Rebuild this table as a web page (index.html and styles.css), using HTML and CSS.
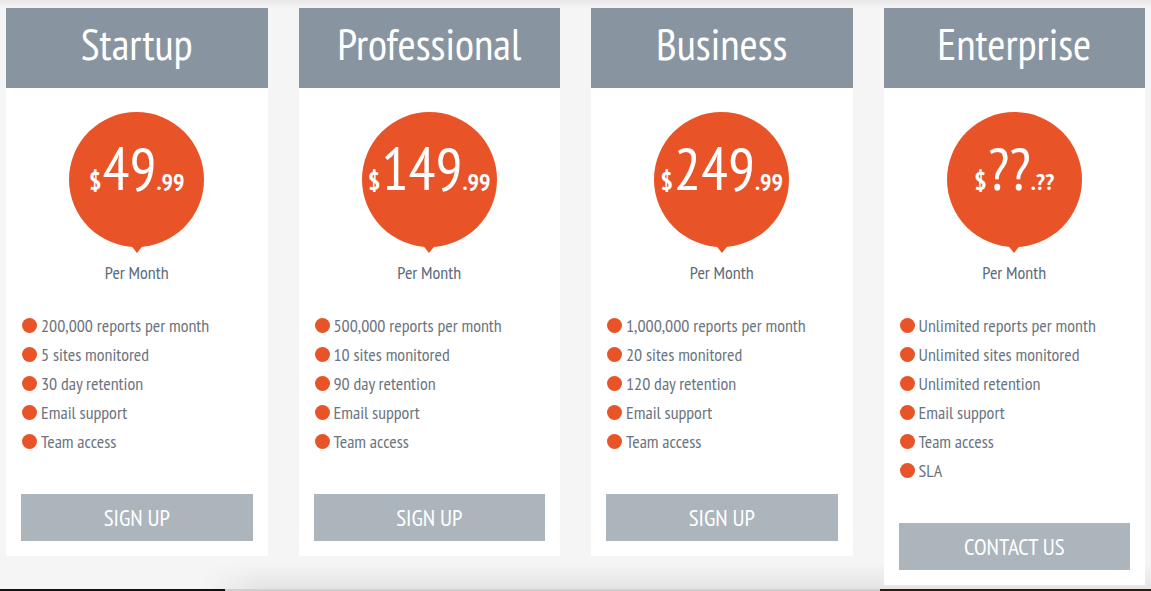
FILE: index.html
```html
<!DOCTYPE html>
<html lang="en">
<head>
<meta charset="utf-8">
<title>Pricing</title>
<link rel="stylesheet" href="styles.css">
</head>
<body>
<div class="topfade"></div>
<div class="bottomshade"></div>
<main class="plans">
  <section class="plan">
    <header class="plan-head"><h2>Startup</h2></header>
    <div class="plan-body">
      <div class="bubble"><span class="cur">$</span><span class="amt">49</span><span class="cents">.99</span></div>
      <p class="period">Per Month</p>
      <ul class="features">
        <li>200,000 reports per month</li>
        <li>5 sites monitored</li>
        <li>30 day retention</li>
        <li>Email support</li>
        <li>Team access</li>
      </ul>
      <a class="btn" href="#">Sign Up</a>
    </div>
  </section>
  <section class="plan">
    <header class="plan-head"><h2>Professional</h2></header>
    <div class="plan-body">
      <div class="bubble"><span class="cur">$</span><span class="amt">149</span><span class="cents">.99</span></div>
      <p class="period">Per Month</p>
      <ul class="features">
        <li>500,000 reports per month</li>
        <li>10 sites monitored</li>
        <li>90 day retention</li>
        <li>Email support</li>
        <li>Team access</li>
      </ul>
      <a class="btn" href="#">Sign Up</a>
    </div>
  </section>
  <section class="plan">
    <header class="plan-head"><h2>Business</h2></header>
    <div class="plan-body">
      <div class="bubble"><span class="cur">$</span><span class="amt">249</span><span class="cents">.99</span></div>
      <p class="period">Per Month</p>
      <ul class="features">
        <li>1,000,000 reports per month</li>
        <li>20 sites monitored</li>
        <li>120 day retention</li>
        <li>Email support</li>
        <li>Team access</li>
      </ul>
      <a class="btn" href="#">Sign Up</a>
    </div>
  </section>
  <section class="plan">
    <header class="plan-head"><h2>Enterprise</h2></header>
    <div class="plan-body">
      <div class="bubble"><span class="cur">$</span><span class="amt">??</span><span class="cents">.??</span></div>
      <p class="period">Per Month</p>
      <ul class="features">
        <li>Unlimited reports per month</li>
        <li>Unlimited sites monitored</li>
        <li>Unlimited retention</li>
        <li>Email support</li>
        <li>Team access</li>
        <li>SLA</li>
      </ul>
      <a class="btn" href="#">Contact Us</a>
    </div>
  </section>
</main>
<div class="edge"></div>
</body>
</html>
```
FILE: styles.css
```css
* { box-sizing: border-box; }
html, body { margin: 0; padding: 0; }
body {
  background: #f5f5f5;
  font-family: "PT Sans Narrow", "Liberation Sans Narrow", "Roboto Condensed", "DejaVu Sans Condensed", sans-serif;
  width: 1151px;
  height: 591px;
  overflow: hidden;
  position: relative;
}
.topfade {
  position: absolute;
  left: 0; top: 0; right: 0;
  height: 8px;
  background: linear-gradient(#e8e8e8, #f4f4f4);
}
.bottomshade {
  position: absolute;
  left: 200px; right: 0; bottom: 0;
  height: 28px;
  background: linear-gradient(rgba(0,0,0,0), rgba(0,0,0,0.07));
  -webkit-mask-image: linear-gradient(to right, transparent, #000 60px);
  mask-image: linear-gradient(to right, transparent, #000 60px);
}
.edge {
  position: absolute;
  left: 0; right: 0; bottom: 0;
  height: 2px;
  background: linear-gradient(to right, #111 0, #111 225px, #cfcfcf 225px, #cfcfcf 880px, #2b1d16 880px);
}
.plans {
  display: flex;
  align-items: flex-start;
  gap: 31px;
  padding: 8px 6px 0;
  position: relative;
  z-index: 1;
}
.plan {
  width: 262px;
  background: #fff;
}
.plan-head {
  height: 80px;
  background: #8994a1;
  display: flex;
  align-items: center;
  justify-content: center;
}
.plan-head h2 {
  margin: 0;
  color: #fff;
  font-weight: normal;
  font-size: 44px;
  line-height: 1;
  padding-bottom: 8px;
}
.plan-body {
  padding: 24px 15px 15px;
  display: flex;
  flex-direction: column;
}
.bubble {
  position: relative;
  width: 135px;
  height: 135px;
  border-radius: 50%;
  background: #e85428;
  align-self: center;
  display: flex;
  align-items: baseline;
  justify-content: center;
  color: #fff;
  padding-top: 26px;
  line-height: 1;
}
.bubble::after {
  content: "";
  position: absolute;
  left: 50%;
  bottom: -6px;
  margin-left: -8px;
  border-left: 8px solid transparent;
  border-right: 8px solid transparent;
  border-top: 10px solid #e85428;
}
.cur { font-size: 26px; font-weight: bold; margin-right: 1px; }
.amt { font-size: 60px; }
.cents { font-size: 24px; font-weight: bold; }
.period {
  margin: 16px 0 0;
  text-align: center;
  font-size: 18px;
  line-height: 20px;
  color: #5c6a7a;
}
.features {
  list-style: none;
  margin: 28px 0 0;
  padding: 0 0 0 1px;
}
.features li {
  display: flex;
  align-items: center;
  gap: 4px;
  height: 29px;
  font-size: 18px;
  color: #6b747f;
}
.features li::before {
  content: "";
  width: 15px;
  height: 15px;
  border-radius: 50%;
  background: #e85428;
  flex: none;
}
.btn {
  margin-top: 38px;
  height: 47px;
  background: #adb5bc;
  color: #fff;
  text-decoration: none;
  text-transform: uppercase;
  font-size: 23px;
  display: flex;
  align-items: center;
  justify-content: center;
}
```
